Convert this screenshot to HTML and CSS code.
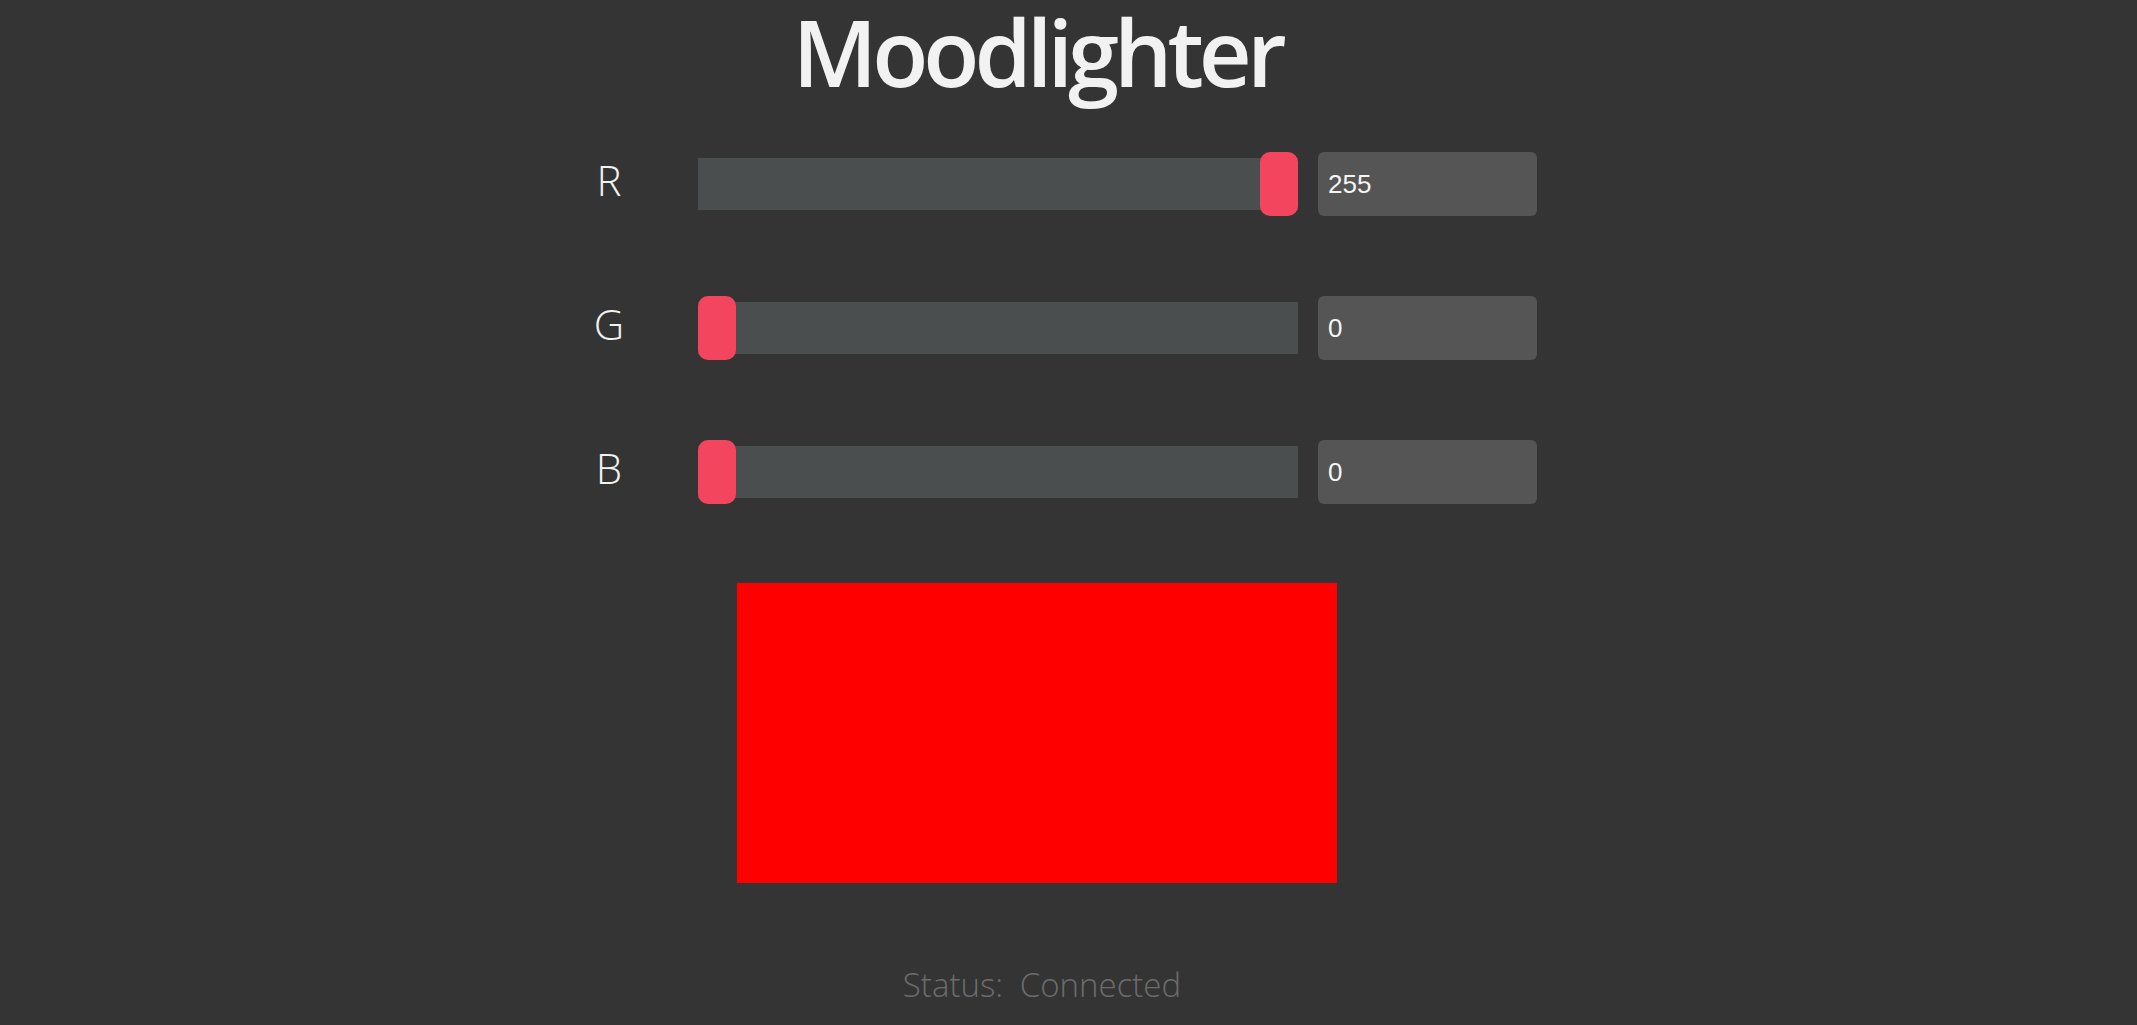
FILE: index.html
```html
<!DOCTYPE html>
<html lang="en">
<head>
<meta charset="UTF-8">
<meta name="viewport" content="width=device-width, initial-scale=1.0">
<title>Moodlighter</title>
<link rel="stylesheet" href="styles.css">
</head>
<body>
<div class="app">
  <h1 class="title">Moodlighter</h1>
  <div class="controls">
    <label class="channel" for="red">R</label>
    <input type="range" class="slider" id="red" min="0" max="255" value="255">
    <input type="text" class="value" id="redValue" value="255">

    <label class="channel" for="green">G</label>
    <input type="range" class="slider" id="green" min="0" max="255" value="0">
    <input type="text" class="value" id="greenValue" value="0">

    <label class="channel" for="blue">B</label>
    <input type="range" class="slider" id="blue" min="0" max="255" value="0">
    <input type="text" class="value" id="blueValue" value="0">
  </div>
  <div class="preview" id="preview"></div>
  <p class="status"><span class="status-label">Status:</span> <span id="statusText">Connected</span></p>
</div>
</body>
</html>
```
FILE: styles.css
```css
body {
  margin: 0;
  padding: 0;
  background-color: #343434;
  font-family: "Open Sans", sans-serif;
  color: #f2f2f2;
}

.app {
  width: 2084px;
  display: flex;
  flex-direction: column;
  align-items: center;
}

.title {
  margin: 0 10px 0 0;
  font-size: 92px;
  font-weight: 600;
  letter-spacing: -5px;
  line-height: 104px;
  color: #f2f2f2;
}

.controls {
  align-self: flex-start;
  display: grid;
  grid-template-columns: 105px 600px 239px;
  row-gap: 80px;
  align-items: center;
  margin-top: 48px;
  margin-left: 593px;
}

.channel {
  width: 32px;
  padding-bottom: 8px;
  font-size: 42px;
  font-weight: 300;
  line-height: 1;
  text-align: center;
}

.slider {
  -webkit-appearance: none;
  appearance: none;
  width: 600px;
  height: 64px;
  margin: 0;
  background: transparent;
}

.slider::-webkit-slider-runnable-track {
  height: 52px;
  background-color: #4a4e4f;
}

.slider::-webkit-slider-thumb {
  -webkit-appearance: none;
  width: 38px;
  height: 64px;
  margin-top: -6px;
  border-radius: 10px;
  background-color: #f4455f;
  cursor: pointer;
}

.value {
  box-sizing: border-box;
  width: 219px;
  height: 64px;
  margin-left: 20px;
  padding: 0 10px;
  border: none;
  border-radius: 6px;
  background-color: #555555;
  color: #f4f4f4;
  font-family: "Liberation Sans", Arial, sans-serif;
  font-size: 26px;
}

.preview {
  width: 600px;
  height: 300px;
  margin-top: 79px;
  margin-right: 10px;
  background-color: rgb(255, 0, 0);
}

.status {
  margin: 79px 0 0;
  font-size: 33px;
  font-weight: 300;
  color: #6c6c6c;
  word-spacing: 8px;
}
```
